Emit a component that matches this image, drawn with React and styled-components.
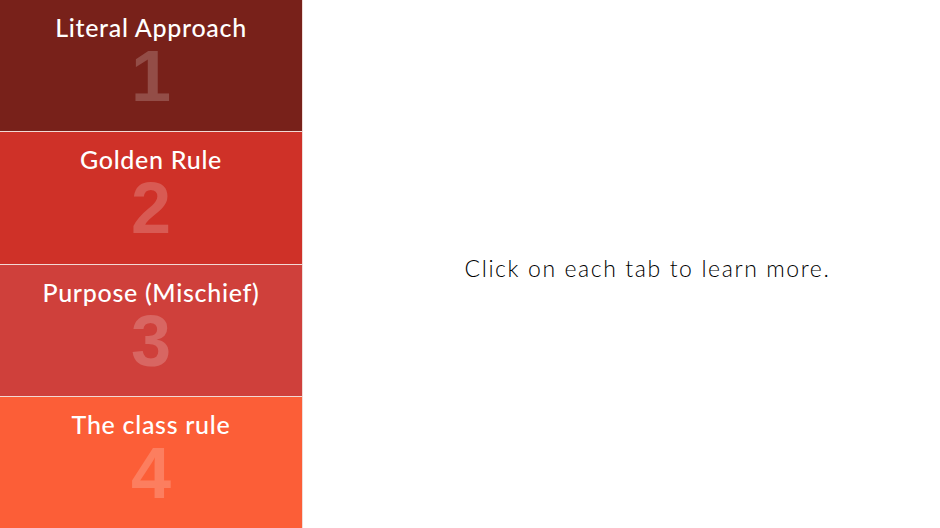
import React from 'react'
import styled, { createGlobalStyle } from 'styled-components'

const GlobalStyle = createGlobalStyle`
    html, body {
        margin: 0;
        padding: 0;
        background: #fff;
    }
    body {
        font-family: "Lato", "Open Sans", sans-serif;
    }
`

const tabs = [
    { title: 'Literal Approach', color: '#78211a' },
    { title: 'Golden Rule', color: '#cf3128' },
    { title: 'Purpose (Mischief)', color: '#cf403b' },
    { title: 'The class rule', color: '#fc5e37' },
]

const Page = styled.div`
    display: flex;
    width: 940px;
    height: 528px;
`

const TabList = styled.div`
    display: flex;
    flex-direction: column;
    gap: 1px;
    width: 302px;
    background: #f3d9d4;
    border-right: 1px solid #f0dcd8;
`

const Tab = styled.button`
    flex: 1;
    display: flex;
    flex-direction: column;
    align-items: center;
    border: 0;
    margin: 0;
    padding: 12px 0 0;
    background: ${(p) => p.$bg};
    color: #fff;
    cursor: pointer;
`

const TabTitle = styled.span`
    font-family: "Lato", sans-serif;
    font-size: 25px;
    font-weight: 500;
    line-height: 30px;
    letter-spacing: 0.7px;
`

const TabNumber = styled.span`
    font-family: "Liberation Sans", Arial, sans-serif;
    font-size: 72px;
    font-weight: 700;
    line-height: 69px;
    color: rgba(255, 255, 255, 0.2);
`

const Content = styled.div`
    flex: 1;
    display: flex;
    align-items: center;
    justify-content: center;
    padding-left: 52px;
    padding-top: 8px;
`

const Hint = styled.p`
    margin: 0;
    font-family: "Lato", sans-serif;
    font-size: 23px;
    font-weight: 300;
    letter-spacing: 1.6px;
    color: #000;
`

const App = () => {
    return (
        <Page>
            <GlobalStyle />
            <TabList>
                {tabs.map((t, i) => (
                    <Tab key={t.title} $bg={t.color}>
                        <TabTitle>{t.title}</TabTitle>
                        <TabNumber>{i + 1}</TabNumber>
                    </Tab>
                ))}
            </TabList>
            <Content>
                <Hint>Click on each tab to learn more.</Hint>
            </Content>
        </Page>
    )
}

export default App
